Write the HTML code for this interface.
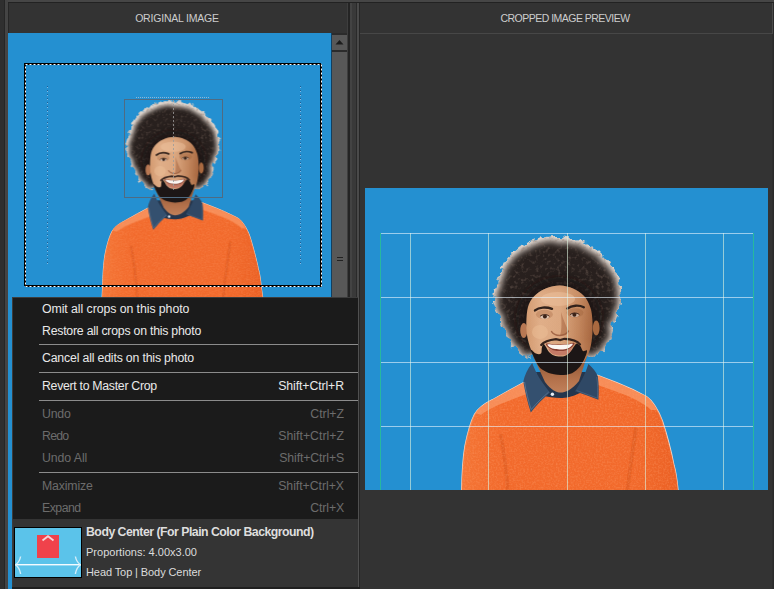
<!DOCTYPE html>
<html lang="en"><head><meta charset="utf-8"><title>Crop preview</title>
<style>
html,body{margin:0;padding:0;}
body{width:774px;height:589px;overflow:hidden;background:#2e2e2e;position:relative;font-family:"Liberation Sans",sans-serif;}
.abs{position:absolute;}
.hdr{position:absolute;top:3px;height:30px;line-height:30px;text-align:center;color:#cdcdcd;font-size:10.5px;white-space:nowrap;}
.mi{position:absolute;left:42px;font-size:12.3px;line-height:16px;height:16px;white-space:nowrap;color:#e9e9e9;}
.sc{position:absolute;right:430px;font-size:12.3px;line-height:16px;height:16px;white-space:nowrap;color:#e9e9e9;text-align:right;}
.dis{color:#6c6c6c;}
.sep{position:absolute;left:39px;width:319px;height:1px;background:#8c8c8c;}
svg{position:absolute;left:0;top:0;}
</style></head><body>
<div class="abs" style="left:0;top:0;width:774px;height:2px;background:#464646"></div>
<div class="abs" style="left:0;top:2px;width:774px;height:1px;background:#222"></div>
<div class="abs" style="left:0;top:0px;width:4px;height:589px;background:#2f2f2f"></div>
<div class="abs" style="left:4px;top:0px;width:1px;height:589px;background:#262626"></div>
<div class="abs" style="left:5px;top:0px;width:3px;height:589px;background:#444"></div>
<div class="abs" style="left:8px;top:3px;width:1px;height:30px;background:#262626"></div>
<div class="abs" style="left:9px;top:3px;width:338px;height:586px;background:#333"></div>
<div class="hdr" style="left:8px;width:338px;letter-spacing:-0.203px;">ORIGINAL IMAGE</div>
<div class="abs" style="left:347px;top:3px;width:1px;height:586px;background:#3e3e3e"></div>
<div class="abs" style="left:348px;top:3px;width:2px;height:586px;background:#242424"></div>
<div class="abs" style="left:350px;top:3px;width:2px;height:586px;background:#434343"></div>
<div class="abs" style="left:352px;top:3px;width:4px;height:586px;background:#393939"></div>
<div class="abs" style="left:356px;top:3px;width:1px;height:586px;background:#2a2a2a"></div>
<div class="abs" style="left:357px;top:3px;width:2px;height:586px;background:#4a4a4a"></div>
<div class="abs" style="left:359px;top:3px;width:1px;height:586px;background:#262626"></div>
<div class="abs" style="left:360px;top:3px;width:412px;height:586px;background:#333"></div>
<div class="hdr" style="left:359px;width:412px;letter-spacing:-0.521px;">CROPPED IMAGE PREVIEW</div>
<div class="abs" style="left:360px;top:33px;width:412px;height:1px;background:#474747"></div>
<div class="abs" style="left:772px;top:3px;width:1px;height:31px;background:#4a4a4a"></div>
<div class="abs" style="left:773px;top:3px;width:1px;height:586px;background:#2a2a2a"></div>
<div class="abs" style="left:8px;top:33px;width:323px;height:556px;background:#2490d1"></div>
<div class="abs" style="left:331px;top:33px;width:1px;height:556px;background:#123f60"></div>
<div class="abs" style="left:332px;top:33px;width:15px;height:556px;background:#2b2b2b"></div>
<div class="abs" style="left:332px;top:35px;width:15px;height:15px;background:#585858"></div>
<div class="abs" style="left:332px;top:52px;width:15px;height:300px;background:#585858"></div>
<div class="abs" style="left:365px;top:188px;width:403px;height:302px;background:#2490d1"></div>
<svg width="774" height="589" viewBox="0 0 774 589">
<defs>
<filter id="hairf" x="-10%" y="-10%" width="120%" height="120%" color-interpolation-filters="sRGB">
<feTurbulence type="fractalNoise" baseFrequency="0.14" numOctaves="2" seed="3" result="n"/>
<feDisplacementMap in="SourceGraphic" in2="n" scale="9" xChannelSelector="R" yChannelSelector="G" result="d"/>
<feMorphology in="d" operator="erode" radius="2.2" result="e"/>
<feGaussianBlur in="e" stdDeviation="3.6" result="b0"/><feOffset in="b0" dy="2.2" result="b"/>
<feColorMatrix in="b" type="matrix" values="0 0 0 0 0.15  0 0 0 0 0.12  0 0 0 0 0.11  0 0 0 1.12 -0.13" result="dark"/>
<feComposite in="dark" in2="d" operator="atop" result="h"/>
<feTurbulence type="fractalNoise" baseFrequency="0.28" numOctaves="2" seed="8" result="t"/>
<feColorMatrix in="t" type="matrix" values="0 0 0 0 0.50  0 0 0 0 0.42  0 0 0 0 0.38  1.3 0 0 0 -0.66" result="tex"/>
<feGaussianBlur in="tex" stdDeviation="0.6" result="texb"/>
<feComposite in="texb" in2="d" operator="in" result="texin"/>
<feMerge result="m"><feMergeNode in="h"/><feMergeNode in="texin"/></feMerge>
<feGaussianBlur in="m" stdDeviation="0.4"/>
</filter>
<filter id="heather" x="0" y="0" width="100%" height="100%" color-interpolation-filters="sRGB"><feTurbulence type="fractalNoise" baseFrequency="0.55" numOctaves="2" seed="5" result="t"/><feColorMatrix in="t" type="matrix" values="0 0 0 0 1  0 0 0 0 0.62  0 0 0 0 0.42  0 1.9 0 0 -0.75" result="c"/><feComposite in="c" in2="SourceGraphic" operator="in"/></filter>
<filter id="soft" x="-10%" y="-10%" width="120%" height="120%"><feGaussianBlur stdDeviation="0.7"/></filter>
<filter id="soft3" x="-20%" y="-20%" width="140%" height="140%"><feGaussianBlur stdDeviation="4"/></filter>
<filter id="soft2" x="-10%" y="-10%" width="120%" height="120%"><feGaussianBlur stdDeviation="0.45"/></filter>
<linearGradient id="sking" gradientUnits="userSpaceOnUse" x1="527" y1="0" x2="593" y2="0"><stop offset="0" stop-color="#d39a70"/><stop offset=".2" stop-color="#e0ae88"/><stop offset=".5" stop-color="#dba780"/><stop offset=".78" stop-color="#c2855c"/><stop offset="1" stop-color="#a5643d"/></linearGradient>
<linearGradient id="skinshade" gradientUnits="userSpaceOnUse" x1="0" y1="285" x2="0" y2="375"><stop offset="0" stop-color="#c98e66" stop-opacity=".55"/><stop offset=".18" stop-color="#e6b890" stop-opacity=".1"/><stop offset=".6" stop-color="#e6b890" stop-opacity="0"/><stop offset="1" stop-color="#a05c38" stop-opacity=".3"/></linearGradient>
<linearGradient id="neckg" gradientUnits="userSpaceOnUse" x1="0" y1="360" x2="0" y2="392"><stop offset="0" stop-color="#8f5636"/><stop offset=".6" stop-color="#b3714b"/><stop offset="1" stop-color="#c08059"/></linearGradient>
<linearGradient id="swg" gradientUnits="userSpaceOnUse" x1="462" y1="0" x2="678" y2="0"><stop offset="0" stop-color="#f47838" stop-opacity=".9"/><stop offset=".25" stop-color="#f26a2c" stop-opacity="0"/><stop offset=".7" stop-color="#f26a2c" stop-opacity="0"/><stop offset="1" stop-color="#e95e22" stop-opacity=".9"/></linearGradient>
<clipPath id="clipL"><rect x="8" y="33" width="323" height="264"/></clipPath>
<clipPath id="clipR"><rect x="365" y="188" width="403" height="302"/></clipPath>
</defs>
<g clip-path="url(#clipR)"><g class="pr">
<path d="M523.2,382.7 L509.4,390.2 L492.5,399.7 C486,403 478,408 474.4,414.6 C470,423 467,436 464.9,446.4 C463,458 462,475 461.7,490 L460.6,512 L681,512 L678,490 C677,480 676,472 674,465.5 C672,455 666,432 662.4,421 C659,411 652,400 646.4,396.5 C640,393 625,386 616.7,382.7 L597.6,375.3 L560,370 Z" fill="#f26a2c" stroke="#f8d8c6" stroke-width="1.3" stroke-linejoin="round"/>
<path d="M523.2,382.7 L509.4,390.2 L492.5,399.7 C486,403 478,408 474.4,414.6 C470,423 467,436 464.9,446.4 C463,458 462,475 461.7,490 L460.6,512 L681,512 L678,490 C677,480 676,472 674,465.5 C672,455 666,432 662.4,421 C659,411 652,400 646.4,396.5 C640,393 625,386 616.7,382.7 L597.6,375.3 L560,370 Z" fill="url(#swg)"/>
<g filter="url(#soft)">
<path d="M523.2,382.7 L509.4,390.2 L492.5,399.7 C486,403 479,407 475.5,413 L481,415 C488,409 500,404 512,399.5 L528,393.5 Z" fill="#f78d58"/>
<path d="M597.6,375.3 L616.7,382.7 C625,386 640,393 646.4,396.5 C650,399 654,404 657,410 L651,410 C645,404 636,399.5 624,394.5 L598,385 Z" fill="#f78d58"/>
<path d="M500.5,434 C504,452 506.5,470 508,492 L509,512" fill="none" stroke="#cf4e1a" stroke-width="3.6" opacity=".38"/>
<path d="M636,428 C633,450 629.5,470 627.3,492 L626,512" fill="none" stroke="#cf4e1a" stroke-width="3.6" opacity=".38"/>
</g>
<path d="M523.2,382.7 L509.4,390.2 L492.5,399.7 C486,403 478,408 474.4,414.6 C470,423 467,436 464.9,446.4 C463,458 462,475 461.7,490 L460.6,512 L681,512 L678,490 C677,480 676,472 674,465.5 C672,455 666,432 662.4,421 C659,411 652,400 646.4,396.5 C640,393 625,386 616.7,382.7 L597.6,375.3 L560,370 Z" fill="#f9a070" filter="url(#heather)" opacity=".42"/>
<path d="M536,372 L586,372 L580,393 C572,397 566,398 560.5,398 C554,398 548,397.2 542,395 Z" fill="#25364d"/>
<path d="M533,356 L587,356 L579,381 C572,390 565,392.5 560.5,392.5 C556,392.5 551,390 545,382 Z" fill="url(#neckg)"/>
<path d="M532.2,363 C527.5,369 524.5,375.5 523.3,381.6 C525,392 527.5,402.5 530.8,412.4 C536.5,405 543.5,398 550,392.4 C543,384 536,374 532.2,363 Z" fill="#34506f"/>
<path d="M588.4,364 C593,368 596,372 597.8,376.2 C598.9,384 598.9,392 598.4,399.8 C590.5,396.6 582.5,393.8 575,391.2 C580.5,383 585.5,373.6 588.4,364 Z" fill="#2f4865"/>
<path d="M524.6,382 C526,392 528.4,401 531.2,409.6 C536.5,403 543,397 548.6,392.2" fill="none" stroke="#6d87a3" stroke-width=".7" opacity=".8"/>
<path d="M596.8,377 C597.8,384 597.8,391 597.4,398.2 C590.6,395.6 583.4,393 576.6,390.6" fill="none" stroke="#5d7691" stroke-width=".7" opacity=".7"/>
<circle cx="552.4" cy="394.2" r="1.7" fill="#e8eef6"/>
<path d="M556.7,236.0C560.5,236.0 564.2,236.5 568.0,237.2C571.8,237.9 574.8,238.5 579.5,240.4C584.2,242.3 591.2,245.2 596.0,248.7C600.8,252.2 605.0,257.0 608.5,261.2C612.0,265.4 614.8,268.8 616.8,273.6C618.8,278.4 619.8,284.7 620.2,290.2C620.7,295.7 620.4,301.6 619.5,306.8C618.6,312.0 616.5,316.5 615.0,321.3C613.5,326.1 612.5,331.3 610.8,335.8C609.1,340.3 606.7,345.1 604.6,348.2C602.5,351.3 600.3,353.0 598.0,354.5C595.7,356.0 594.0,357.6 591.0,357.2C588.0,356.8 585.2,353.2 580.0,352.0C574.8,350.8 566.7,350.0 560.0,350.0C553.3,350.0 545.2,350.9 540.0,352.0C534.8,353.1 532.8,357.2 529.0,356.8C525.2,356.4 520.5,352.5 517.0,349.5C513.5,346.5 510.4,342.7 508.0,339.0C505.6,335.3 504.2,331.5 502.6,327.5C501.0,323.5 500.1,319.1 498.5,315.0C496.9,310.9 494.0,306.7 493.3,302.6C492.6,298.5 493.3,294.7 494.3,290.2C495.3,285.7 497.6,280.5 499.5,275.7C501.4,270.9 502.4,265.7 505.7,261.2C509.0,256.7 514.9,252.2 519.2,248.7C523.6,245.2 527.5,242.3 531.8,240.4C536.1,238.5 540.9,237.7 545.0,237.0C549.1,236.3 552.9,236.0 556.7,236.0Z" fill="#ddd3cb" filter="url(#hairf)"/>
<ellipse cx="559" cy="318" rx="43" ry="41" fill="#120d0b" opacity=".55" filter="url(#soft3)"/>
<g filter="url(#soft)">
<ellipse cx="523.8" cy="330.5" rx="3.6" ry="7.6" fill="#b87852"/>
<ellipse cx="596.2" cy="328" rx="3.4" ry="7.6" fill="#a9693f"/>
<path d="M526.5,318.0C526.8,312.8 527.4,307.9 529.0,304.0C530.6,300.1 533.0,297.2 536.0,294.5C539.0,291.8 543.0,289.5 547.0,288.0C551.0,286.5 555.7,285.4 560.0,285.5C564.3,285.6 569.0,286.8 573.0,288.5C577.0,290.2 581.1,292.8 584.0,296.0C586.9,299.2 589.1,303.7 590.5,308.0C591.9,312.3 592.2,317.0 592.5,322.0C592.8,327.0 592.6,333.0 592.0,338.0C591.4,343.0 590.7,347.7 589.0,352.0C587.3,356.3 585.0,360.8 582.0,364.0C579.0,367.2 574.8,369.8 571.0,371.5C567.2,373.2 562.8,374.1 559.0,374.0C555.2,373.9 551.9,373.0 548.5,371.0C545.1,369.0 541.5,365.5 538.6,362.0C535.7,358.5 533.1,354.5 531.2,350.0C529.3,345.5 527.8,340.3 527.0,335.0C526.2,329.7 526.2,323.2 526.5,318.0Z" fill="url(#sking)"/>
<path d="M526.5,318.0C526.8,312.8 527.4,307.9 529.0,304.0C530.6,300.1 533.0,297.2 536.0,294.5C539.0,291.8 543.0,289.5 547.0,288.0C551.0,286.5 555.7,285.4 560.0,285.5C564.3,285.6 569.0,286.8 573.0,288.5C577.0,290.2 581.1,292.8 584.0,296.0C586.9,299.2 589.1,303.7 590.5,308.0C591.9,312.3 592.2,317.0 592.5,322.0C592.8,327.0 592.6,333.0 592.0,338.0C591.4,343.0 590.7,347.7 589.0,352.0C587.3,356.3 585.0,360.8 582.0,364.0C579.0,367.2 574.8,369.8 571.0,371.5C567.2,373.2 562.8,374.1 559.0,374.0C555.2,373.9 551.9,373.0 548.5,371.0C545.1,369.0 541.5,365.5 538.6,362.0C535.7,358.5 533.1,354.5 531.2,350.0C529.3,345.5 527.8,340.3 527.0,335.0C526.2,329.7 526.2,323.2 526.5,318.0Z" fill="url(#skinshade)"/>
<ellipse cx="544.4" cy="314.4" rx="8.5" ry="4.6" fill="#b27650" opacity=".45"/>
<ellipse cx="575" cy="312.8" rx="8.5" ry="4.6" fill="#a0643f" opacity=".45"/>
<ellipse cx="540" cy="332" rx="8" ry="7" fill="#eec09a" opacity=".45"/>
<ellipse cx="558" cy="299" rx="17" ry="7" fill="#efc6a2" opacity=".45"/>
<path d="M561,312 C563.5,320 566,326 568.4,330.6 C567,334 564,335.4 560,335.6 C562,330 561.6,320 561,312 Z" fill="#a5643f" opacity=".55"/>
<path d="M551.6,331.6 C553.6,334.8 557,335.4 560,335.6 C563.4,335.4 566.6,334.6 568.4,331.2" fill="none" stroke="#96583a" stroke-width="1.5" stroke-linecap="round" opacity=".8"/>
</g>
<g filter="url(#soft2)">
<path d="M535,310.4 C539,307.2 546,306.6 552,308.8" fill="none" stroke="#33211a" stroke-width="2.4" stroke-linecap="round"/>
<path d="M567.4,308.4 C572,305.2 579,304.8 583.8,307.2" fill="none" stroke="#33211a" stroke-width="2.4" stroke-linecap="round"/>
<ellipse cx="544.6" cy="316.7" rx="4.3" ry="2" fill="#dcc3b2"/>
<ellipse cx="574.6" cy="315" rx="4.3" ry="2" fill="#cfb09c"/>
<circle cx="544.9" cy="316.5" r="2" fill="#3a2318"/><circle cx="574.4" cy="314.8" r="2" fill="#3a2318"/>
<path d="M540,316.4 C542,314.2 547,314 549.4,316.2" fill="none" stroke="#3a2318" stroke-width="1"/>
<path d="M570,314.8 C572,312.6 577,312.4 579.4,314.6" fill="none" stroke="#3a2318" stroke-width="1"/>
<path d="M530.6,349.6C530.2,350.1 532.5,354.3 533.6,356.6C534.7,358.9 535.7,361.5 537.0,363.6C538.3,365.7 539.1,367.3 541.4,369.0C543.7,370.7 547.3,372.6 550.6,373.6C553.9,374.6 557.4,375.1 561.0,375.0C564.6,374.9 568.8,374.6 572.0,373.2C575.2,371.8 577.9,369.0 580.0,366.6C582.1,364.2 583.4,361.3 584.6,358.6C585.8,355.9 587.3,351.9 587.0,350.6C586.7,349.3 584.1,351.7 583.0,351.0C581.9,350.3 581.6,347.6 580.6,346.4C579.6,345.2 578.0,343.7 577.0,343.6C576.0,343.5 575.4,344.8 574.4,346.0C573.4,347.2 572.4,349.4 571.0,351.0C569.6,352.6 567.8,354.5 566.0,355.4C564.2,356.3 562.0,356.6 560.0,356.6C558.0,356.6 555.8,356.4 554.0,355.6C552.2,354.8 550.3,353.4 549.0,352.0C547.7,350.6 546.9,348.3 546.0,347.0C545.1,345.7 544.1,343.8 543.4,344.0C542.7,344.2 542.2,346.4 541.8,348.0C541.4,349.6 542.0,352.7 541.0,353.6C540.0,354.5 537.7,354.3 536.0,353.6C534.3,352.9 531.0,349.1 530.6,349.6Z" fill="#1d1614"/>
<path d="M541.2,345 C544,341.6 549,340 556,339.2 L560.2,340 L564.4,338.8 C571,339 577,340.4 580,344.4" fill="none" stroke="#36241c" stroke-width="2.2" stroke-linecap="round"/>
<path d="M548.5,348.6C549.1,348.3 552.1,350.2 554.0,350.6C555.9,351.0 558.0,351.2 560.0,351.2C562.0,351.2 564.1,351.1 566.0,350.6C567.9,350.1 570.9,347.9 571.5,348.2C572.1,348.5 570.7,351.3 569.6,352.4C568.5,353.5 566.6,354.3 565.0,354.8C563.4,355.3 561.7,355.4 560.0,355.4C558.3,355.4 556.6,355.3 555.0,354.8C553.4,354.3 551.7,353.4 550.6,352.4C549.5,351.4 547.9,348.9 548.5,348.6Z" fill="#c47a66"/>
<path d="M546.0,343.8C546.7,343.2 550.6,344.1 553.0,344.2C555.4,344.3 558.0,344.6 560.5,344.6C563.0,344.6 565.7,344.3 568.0,344.0C570.3,343.7 573.8,342.4 574.4,343.0C575.0,343.6 573.0,346.4 571.6,347.6C570.2,348.8 567.9,349.8 566.0,350.4C564.1,351.0 562.0,351.0 560.0,351.0C558.0,351.0 555.9,350.9 554.0,350.4C552.1,349.9 549.9,348.9 548.6,347.8C547.3,346.7 545.3,344.4 546.0,343.8Z" fill="#8a3f32"/>
<path d="M547.6,344.3C548.4,343.9 551.9,344.7 554.0,344.8C556.1,344.9 558.3,345.0 560.5,345.0C562.7,345.0 565.0,344.8 567.0,344.6C569.0,344.4 572.3,343.4 572.8,343.8C573.3,344.2 571.4,346.3 570.0,347.2C568.6,348.1 566.4,348.8 564.6,349.2C562.8,349.6 561.2,349.6 559.4,349.5C557.6,349.4 555.3,349.2 553.6,348.8C551.9,348.4 550.4,347.8 549.4,347.0C548.4,346.2 546.8,344.7 547.6,344.3Z" fill="#fbf7f3"/>
</g>
</g></g>
<g clip-path="url(#clipL)"><g transform="translate(172.5,100.5) scale(0.7337) translate(-557,-236)"><g class="pl">
<path d="M523.2,382.7 L509.4,390.2 L492.5,399.7 C486,403 478,408 474.4,414.6 C470,423 467,436 464.9,446.4 C463,458 462,475 461.7,490 L460.6,512 L681,512 L678,490 C677,480 676,472 674,465.5 C672,455 666,432 662.4,421 C659,411 652,400 646.4,396.5 C640,393 625,386 616.7,382.7 L597.6,375.3 L560,370 Z" fill="#f26a2c" stroke="#f8d8c6" stroke-width="1.3" stroke-linejoin="round"/>
<path d="M523.2,382.7 L509.4,390.2 L492.5,399.7 C486,403 478,408 474.4,414.6 C470,423 467,436 464.9,446.4 C463,458 462,475 461.7,490 L460.6,512 L681,512 L678,490 C677,480 676,472 674,465.5 C672,455 666,432 662.4,421 C659,411 652,400 646.4,396.5 C640,393 625,386 616.7,382.7 L597.6,375.3 L560,370 Z" fill="url(#swg)"/>
<g filter="url(#soft)">
<path d="M523.2,382.7 L509.4,390.2 L492.5,399.7 C486,403 479,407 475.5,413 L481,415 C488,409 500,404 512,399.5 L528,393.5 Z" fill="#f78d58"/>
<path d="M597.6,375.3 L616.7,382.7 C625,386 640,393 646.4,396.5 C650,399 654,404 657,410 L651,410 C645,404 636,399.5 624,394.5 L598,385 Z" fill="#f78d58"/>
<path d="M500.5,434 C504,452 506.5,470 508,492 L509,512" fill="none" stroke="#cf4e1a" stroke-width="3.6" opacity=".38"/>
<path d="M636,428 C633,450 629.5,470 627.3,492 L626,512" fill="none" stroke="#cf4e1a" stroke-width="3.6" opacity=".38"/>
</g>
<path d="M523.2,382.7 L509.4,390.2 L492.5,399.7 C486,403 478,408 474.4,414.6 C470,423 467,436 464.9,446.4 C463,458 462,475 461.7,490 L460.6,512 L681,512 L678,490 C677,480 676,472 674,465.5 C672,455 666,432 662.4,421 C659,411 652,400 646.4,396.5 C640,393 625,386 616.7,382.7 L597.6,375.3 L560,370 Z" fill="#f9a070" filter="url(#heather)" opacity=".42"/>
<path d="M536,372 L586,372 L580,393 C572,397 566,398 560.5,398 C554,398 548,397.2 542,395 Z" fill="#25364d"/>
<path d="M533,356 L587,356 L579,381 C572,390 565,392.5 560.5,392.5 C556,392.5 551,390 545,382 Z" fill="url(#neckg)"/>
<path d="M532.2,363 C527.5,369 524.5,375.5 523.3,381.6 C525,392 527.5,402.5 530.8,412.4 C536.5,405 543.5,398 550,392.4 C543,384 536,374 532.2,363 Z" fill="#34506f"/>
<path d="M588.4,364 C593,368 596,372 597.8,376.2 C598.9,384 598.9,392 598.4,399.8 C590.5,396.6 582.5,393.8 575,391.2 C580.5,383 585.5,373.6 588.4,364 Z" fill="#2f4865"/>
<path d="M524.6,382 C526,392 528.4,401 531.2,409.6 C536.5,403 543,397 548.6,392.2" fill="none" stroke="#6d87a3" stroke-width=".7" opacity=".8"/>
<path d="M596.8,377 C597.8,384 597.8,391 597.4,398.2 C590.6,395.6 583.4,393 576.6,390.6" fill="none" stroke="#5d7691" stroke-width=".7" opacity=".7"/>
<circle cx="552.4" cy="394.2" r="1.7" fill="#e8eef6"/>
<path d="M556.7,236.0C560.5,236.0 564.2,236.5 568.0,237.2C571.8,237.9 574.8,238.5 579.5,240.4C584.2,242.3 591.2,245.2 596.0,248.7C600.8,252.2 605.0,257.0 608.5,261.2C612.0,265.4 614.8,268.8 616.8,273.6C618.8,278.4 619.8,284.7 620.2,290.2C620.7,295.7 620.4,301.6 619.5,306.8C618.6,312.0 616.5,316.5 615.0,321.3C613.5,326.1 612.5,331.3 610.8,335.8C609.1,340.3 606.7,345.1 604.6,348.2C602.5,351.3 600.3,353.0 598.0,354.5C595.7,356.0 594.0,357.6 591.0,357.2C588.0,356.8 585.2,353.2 580.0,352.0C574.8,350.8 566.7,350.0 560.0,350.0C553.3,350.0 545.2,350.9 540.0,352.0C534.8,353.1 532.8,357.2 529.0,356.8C525.2,356.4 520.5,352.5 517.0,349.5C513.5,346.5 510.4,342.7 508.0,339.0C505.6,335.3 504.2,331.5 502.6,327.5C501.0,323.5 500.1,319.1 498.5,315.0C496.9,310.9 494.0,306.7 493.3,302.6C492.6,298.5 493.3,294.7 494.3,290.2C495.3,285.7 497.6,280.5 499.5,275.7C501.4,270.9 502.4,265.7 505.7,261.2C509.0,256.7 514.9,252.2 519.2,248.7C523.6,245.2 527.5,242.3 531.8,240.4C536.1,238.5 540.9,237.7 545.0,237.0C549.1,236.3 552.9,236.0 556.7,236.0Z" fill="#ddd3cb" filter="url(#hairf)"/>
<ellipse cx="559" cy="318" rx="43" ry="41" fill="#120d0b" opacity=".55" filter="url(#soft3)"/>
<g filter="url(#soft)">
<ellipse cx="523.8" cy="330.5" rx="3.6" ry="7.6" fill="#b87852"/>
<ellipse cx="596.2" cy="328" rx="3.4" ry="7.6" fill="#a9693f"/>
<path d="M526.5,318.0C526.8,312.8 527.4,307.9 529.0,304.0C530.6,300.1 533.0,297.2 536.0,294.5C539.0,291.8 543.0,289.5 547.0,288.0C551.0,286.5 555.7,285.4 560.0,285.5C564.3,285.6 569.0,286.8 573.0,288.5C577.0,290.2 581.1,292.8 584.0,296.0C586.9,299.2 589.1,303.7 590.5,308.0C591.9,312.3 592.2,317.0 592.5,322.0C592.8,327.0 592.6,333.0 592.0,338.0C591.4,343.0 590.7,347.7 589.0,352.0C587.3,356.3 585.0,360.8 582.0,364.0C579.0,367.2 574.8,369.8 571.0,371.5C567.2,373.2 562.8,374.1 559.0,374.0C555.2,373.9 551.9,373.0 548.5,371.0C545.1,369.0 541.5,365.5 538.6,362.0C535.7,358.5 533.1,354.5 531.2,350.0C529.3,345.5 527.8,340.3 527.0,335.0C526.2,329.7 526.2,323.2 526.5,318.0Z" fill="url(#sking)"/>
<path d="M526.5,318.0C526.8,312.8 527.4,307.9 529.0,304.0C530.6,300.1 533.0,297.2 536.0,294.5C539.0,291.8 543.0,289.5 547.0,288.0C551.0,286.5 555.7,285.4 560.0,285.5C564.3,285.6 569.0,286.8 573.0,288.5C577.0,290.2 581.1,292.8 584.0,296.0C586.9,299.2 589.1,303.7 590.5,308.0C591.9,312.3 592.2,317.0 592.5,322.0C592.8,327.0 592.6,333.0 592.0,338.0C591.4,343.0 590.7,347.7 589.0,352.0C587.3,356.3 585.0,360.8 582.0,364.0C579.0,367.2 574.8,369.8 571.0,371.5C567.2,373.2 562.8,374.1 559.0,374.0C555.2,373.9 551.9,373.0 548.5,371.0C545.1,369.0 541.5,365.5 538.6,362.0C535.7,358.5 533.1,354.5 531.2,350.0C529.3,345.5 527.8,340.3 527.0,335.0C526.2,329.7 526.2,323.2 526.5,318.0Z" fill="url(#skinshade)"/>
<ellipse cx="544.4" cy="314.4" rx="8.5" ry="4.6" fill="#b27650" opacity=".45"/>
<ellipse cx="575" cy="312.8" rx="8.5" ry="4.6" fill="#a0643f" opacity=".45"/>
<ellipse cx="540" cy="332" rx="8" ry="7" fill="#eec09a" opacity=".45"/>
<ellipse cx="558" cy="299" rx="17" ry="7" fill="#efc6a2" opacity=".45"/>
<path d="M561,312 C563.5,320 566,326 568.4,330.6 C567,334 564,335.4 560,335.6 C562,330 561.6,320 561,312 Z" fill="#a5643f" opacity=".55"/>
<path d="M551.6,331.6 C553.6,334.8 557,335.4 560,335.6 C563.4,335.4 566.6,334.6 568.4,331.2" fill="none" stroke="#96583a" stroke-width="1.5" stroke-linecap="round" opacity=".8"/>
</g>
<g filter="url(#soft2)">
<path d="M535,310.4 C539,307.2 546,306.6 552,308.8" fill="none" stroke="#33211a" stroke-width="2.4" stroke-linecap="round"/>
<path d="M567.4,308.4 C572,305.2 579,304.8 583.8,307.2" fill="none" stroke="#33211a" stroke-width="2.4" stroke-linecap="round"/>
<ellipse cx="544.6" cy="316.7" rx="4.3" ry="2" fill="#dcc3b2"/>
<ellipse cx="574.6" cy="315" rx="4.3" ry="2" fill="#cfb09c"/>
<circle cx="544.9" cy="316.5" r="2" fill="#3a2318"/><circle cx="574.4" cy="314.8" r="2" fill="#3a2318"/>
<path d="M540,316.4 C542,314.2 547,314 549.4,316.2" fill="none" stroke="#3a2318" stroke-width="1"/>
<path d="M570,314.8 C572,312.6 577,312.4 579.4,314.6" fill="none" stroke="#3a2318" stroke-width="1"/>
<path d="M530.6,349.6C530.2,350.1 532.5,354.3 533.6,356.6C534.7,358.9 535.7,361.5 537.0,363.6C538.3,365.7 539.1,367.3 541.4,369.0C543.7,370.7 547.3,372.6 550.6,373.6C553.9,374.6 557.4,375.1 561.0,375.0C564.6,374.9 568.8,374.6 572.0,373.2C575.2,371.8 577.9,369.0 580.0,366.6C582.1,364.2 583.4,361.3 584.6,358.6C585.8,355.9 587.3,351.9 587.0,350.6C586.7,349.3 584.1,351.7 583.0,351.0C581.9,350.3 581.6,347.6 580.6,346.4C579.6,345.2 578.0,343.7 577.0,343.6C576.0,343.5 575.4,344.8 574.4,346.0C573.4,347.2 572.4,349.4 571.0,351.0C569.6,352.6 567.8,354.5 566.0,355.4C564.2,356.3 562.0,356.6 560.0,356.6C558.0,356.6 555.8,356.4 554.0,355.6C552.2,354.8 550.3,353.4 549.0,352.0C547.7,350.6 546.9,348.3 546.0,347.0C545.1,345.7 544.1,343.8 543.4,344.0C542.7,344.2 542.2,346.4 541.8,348.0C541.4,349.6 542.0,352.7 541.0,353.6C540.0,354.5 537.7,354.3 536.0,353.6C534.3,352.9 531.0,349.1 530.6,349.6Z" fill="#1d1614"/>
<path d="M541.2,345 C544,341.6 549,340 556,339.2 L560.2,340 L564.4,338.8 C571,339 577,340.4 580,344.4" fill="none" stroke="#36241c" stroke-width="2.2" stroke-linecap="round"/>
<path d="M548.5,348.6C549.1,348.3 552.1,350.2 554.0,350.6C555.9,351.0 558.0,351.2 560.0,351.2C562.0,351.2 564.1,351.1 566.0,350.6C567.9,350.1 570.9,347.9 571.5,348.2C572.1,348.5 570.7,351.3 569.6,352.4C568.5,353.5 566.6,354.3 565.0,354.8C563.4,355.3 561.7,355.4 560.0,355.4C558.3,355.4 556.6,355.3 555.0,354.8C553.4,354.3 551.7,353.4 550.6,352.4C549.5,351.4 547.9,348.9 548.5,348.6Z" fill="#c47a66"/>
<path d="M546.0,343.8C546.7,343.2 550.6,344.1 553.0,344.2C555.4,344.3 558.0,344.6 560.5,344.6C563.0,344.6 565.7,344.3 568.0,344.0C570.3,343.7 573.8,342.4 574.4,343.0C575.0,343.6 573.0,346.4 571.6,347.6C570.2,348.8 567.9,349.8 566.0,350.4C564.1,351.0 562.0,351.0 560.0,351.0C558.0,351.0 555.9,350.9 554.0,350.4C552.1,349.9 549.9,348.9 548.6,347.8C547.3,346.7 545.3,344.4 546.0,343.8Z" fill="#8a3f32"/>
<path d="M547.6,344.3C548.4,343.9 551.9,344.7 554.0,344.8C556.1,344.9 558.3,345.0 560.5,345.0C562.7,345.0 565.0,344.8 567.0,344.6C569.0,344.4 572.3,343.4 572.8,343.8C573.3,344.2 571.4,346.3 570.0,347.2C568.6,348.1 566.4,348.8 564.6,349.2C562.8,349.6 561.2,349.6 559.4,349.5C557.6,349.4 555.3,349.2 553.6,348.8C551.9,348.4 550.4,347.8 549.4,347.0C548.4,346.2 546.8,344.7 547.6,344.3Z" fill="#fbf7f3"/>
</g>
</g></g></g>
<rect x="410" y="233" width="1" height="257" fill="#dcf0dc" opacity=".62"/>
<rect x="488" y="233" width="1" height="257" fill="#dcf0dc" opacity=".62"/>
<rect x="567" y="233" width="1" height="257" fill="#dcf0dc" opacity=".62"/>
<rect x="645" y="233" width="1" height="257" fill="#dcf0dc" opacity=".62"/>
<rect x="723" y="233" width="1" height="257" fill="#dcf0dc" opacity=".62"/>
<rect x="380" y="233" width="374" height="1" fill="#e6f2fb" opacity=".62"/>
<rect x="380" y="297" width="374" height="1" fill="#e6f2fb" opacity=".62"/>
<rect x="380" y="362" width="374" height="1" fill="#e6f2fb" opacity=".62"/>
<rect x="380" y="426" width="374" height="1" fill="#e6f2fb" opacity=".62"/>
<rect x="380" y="233" width="1" height="257" fill="#27b89e"/>
<rect x="753" y="233" width="1" height="257" fill="#27b89e"/>
<rect x="24.5" y="63.5" width="296" height="222" fill="none" stroke="#000" stroke-width="1"/>
<rect x="25.5" y="64.5" width="296" height="222" fill="none" stroke="#000" stroke-width="1"/>
<rect x="25.5" y="64.5" width="296" height="222" fill="none" stroke="#fff" stroke-width="1" stroke-dasharray="2 2"/>
<line x1="47.5" y1="86" x2="47.5" y2="264" stroke="#1a5f96" stroke-width="1" stroke-dasharray="1 3"/>
<line x1="47.5" y1="87" x2="47.5" y2="264" stroke="#7fbbe6" stroke-width="1" stroke-dasharray="1 3"/>
<line x1="300.5" y1="86" x2="300.5" y2="264" stroke="#1a5f96" stroke-width="1" stroke-dasharray="1 3"/>
<line x1="300.5" y1="87" x2="300.5" y2="264" stroke="#7fbbe6" stroke-width="1" stroke-dasharray="1 3"/>
<rect x="124.5" y="99.5" width="98" height="98" fill="none" stroke="#4f6b82" stroke-width="1"/>
<line x1="136" y1="97.5" x2="210" y2="97.5" stroke="#8fb6d6" stroke-width="1" stroke-dasharray="1 1"/>
<line x1="173.5" y1="100" x2="173.5" y2="192" stroke="#9a9a9a" stroke-width="1" stroke-dasharray="2 2" opacity=".8"/>
<path d="M335.5,44.5 L339.5,40 L343.5,44.5 Z" fill="#1c1c1c"/>
<rect x="337" y="257" width="6" height="1" fill="#222"/><rect x="337" y="260" width="6" height="1" fill="#222"/>
</svg>
<div class="abs" style="left:12px;top:297px;width:347px;height:291px;background:#1b1b1b"></div>
<div class="abs" style="left:12px;top:297px;width:347px;height:1px;background:#3c3c3c"></div>
<div class="abs" style="left:12px;top:297px;width:1px;height:291px;background:#3c3c3c"></div>
<div class="abs" style="left:358px;top:297px;width:1px;height:291px;background:#505050"></div>
<div class="abs" style="left:13px;top:519px;width:345px;height:67.5px;background:#343434"></div>
<div class="abs" style="left:12px;top:587px;width:348px;height:2px;background:#1f1f1f"></div>
<div class="mi" style="top:301.3px;letter-spacing:-0.061px;">Omit all crops on this photo</div>
<div class="mi" style="top:323.3px;letter-spacing:-0.229px;">Restore all crops on this photo</div>
<div class="mi" style="top:350.3px;letter-spacing:-0.174px;">Cancel all edits on this photo</div>
<div class="mi" style="top:378.3px;letter-spacing:-0.294px;">Revert to Master Crop</div>
<div class="sc" style="top:378.3px;letter-spacing:-0.099px;">Shift+Ctrl+R</div>
<div class="mi dis" style="top:406.3px;letter-spacing:-0.202px;">Undo</div>
<div class="sc dis" style="top:406.3px;letter-spacing:-0.021px;">Ctrl+Z</div>
<div class="mi dis" style="top:428.3px;letter-spacing:-0.752px;">Redo</div>
<div class="sc dis" style="top:428.3px;letter-spacing:0.016px;">Shift+Ctrl+Z</div>
<div class="mi dis" style="top:450.3px;letter-spacing:-0.064px;">Undo All</div>
<div class="sc dis" style="top:450.3px;letter-spacing:-0.133px;">Shift+Ctrl+S</div>
<div class="mi dis" style="top:478.3px;letter-spacing:-0.155px;">Maximize</div>
<div class="sc dis" style="top:478.3px;letter-spacing:-0.041px;">Shift+Ctrl+X</div>
<div class="mi dis" style="top:500.3px;letter-spacing:-0.520px;">Expand</div>
<div class="sc dis" style="top:500.3px;letter-spacing:-0.136px;">Ctrl+X</div>
<div class="sep" style="top:344px"></div>
<div class="sep" style="top:372px"></div>
<div class="sep" style="top:400px"></div>
<div class="sep" style="top:472px"></div>
<div class="abs" style="left:14px;top:527px;width:68px;height:51px;background:#000"></div>
<svg style="left:15px;top:528px" width="66" height="49" viewBox="0 0 66 49"><rect width="66" height="49" fill="#5bc3ea"/><rect x="22" y="7" width="22" height="23" fill="#f0424b"/><path d="M27.5,12.5 L33,8.2 L38.5,12.5" fill="none" stroke="#f6d5d8" stroke-width="1.8"/><rect x="0" y="36" width="66" height="1.4" fill="#f4fbff"/><path d="M5.6,28.5 C5,32 3,35 0.6,36.7 C3,38.5 5,42 5.6,46" fill="none" stroke="#d4eefa" stroke-width="1.4"/><path d="M60.4,28.5 C61,32 63,35 65.4,36.7 C63,38.5 61,42 60.4,46" fill="none" stroke="#d4eefa" stroke-width="1.4"/></svg>
<div class="abs" style="left:86px;top:523.5px;font-size:12.3px;line-height:16px;font-weight:bold;color:#dedede;white-space:nowrap;letter-spacing:-0.508px;">Body Center (For Plain Color Background)</div>
<div class="abs" style="left:86px;top:544px;font-size:11px;line-height:16px;color:#dcdcdc;white-space:nowrap;letter-spacing:0.014px;">Proportions: 4.00x3.00</div>
<div class="abs" style="left:86px;top:564px;font-size:11px;line-height:16px;color:#dcdcdc;white-space:nowrap;letter-spacing:-0.092px;">Head Top | Body Center</div>
</body></html>
